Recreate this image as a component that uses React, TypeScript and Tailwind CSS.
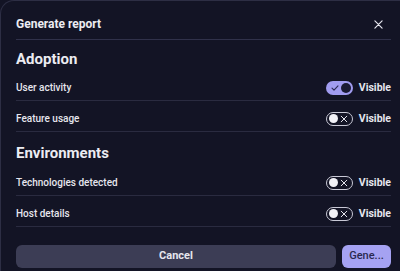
import React from "react";

function Toggle({ on }: { on: boolean }) {
  if (on) {
    return (
      <div className="flex h-[14px] w-[27px] items-center justify-between rounded-full bg-[#a19cf0] pl-[5px] pr-[2px]">
        <svg width="8" height="8" viewBox="0 0 8 8" fill="none">
          <path d="M1 4.2 L3 6.2 L7 1.8" stroke="#2c2a55" strokeWidth="1.1" strokeLinecap="round" strokeLinejoin="round" />
        </svg>
        <div className="h-[10px] w-[10px] rounded-full bg-[#1a1a33]" />
      </div>
    );
  }
  return (
    <div className="flex h-[14px] w-[27px] items-center justify-between rounded-full border border-[#c9c9d6] pl-[2px] pr-[4px]">
      <div className="h-[9px] w-[9px] rounded-full bg-[#f2f2f7]" />
      <svg width="8" height="8" viewBox="0 0 8 8" fill="none">
        <path d="M1.2 1.2 L6.8 6.8 M6.8 1.2 L1.2 6.8" stroke="#e5e5ee" strokeWidth="1" strokeLinecap="round" />
      </svg>
    </div>
  );
}

function Row({ label, on }: { label: string; on: boolean }) {
  return (
    <div className="flex h-[31px] items-center justify-between border-b border-[#2a2b40] pt-[5px]">
      <span className="text-[10px] font-medium leading-[14px] text-[#e6e6ee]">{label}</span>
      <div className="flex items-center gap-[6px]">
        <Toggle on={on} />
        <span className="text-[10.5px] font-bold leading-[14px] text-[#e6e6ee]">Visible</span>
      </div>
    </div>
  );
}

export default function App() {
  return (
    <div
      className="h-[271px] w-[400px] overflow-hidden bg-[#131425]"
      style={{ fontFamily: "Roboto, sans-serif" }}
    >
      <div className="h-[300px] w-[420px] rounded-tl-[14px] border-l border-t border-[#2d2e44] bg-[#131425]">
        <div className="w-[399px] pl-[15px] pr-[9px]">
          <div className="flex h-[39px] items-center justify-between border-b border-[#30314a] pt-[8px]">
            <span className="text-[12px] font-bold leading-[16px] text-[#ececf2]">Generate report</span>
            <svg width="9" height="9" viewBox="0 0 10 10" fill="none" className="mr-[8px]">
              <path d="M1 1 L9 9 M9 1 L1 9" stroke="#e8e8f0" strokeWidth="1.3" strokeLinecap="round" />
            </svg>
          </div>
          <div className="h-[30px] pt-[10px]">
            <div className="text-[15px] font-bold leading-[18px] text-[#ececf2]">Adoption</div>
          </div>
          <Row label="User activity" on={true} />
          <Row label="Feature usage" on={false} />
          <div className="h-[33px] pt-[12px]">
            <div className="text-[15px] font-bold leading-[18px] text-[#ececf2]">Environments</div>
          </div>
          <Row label="Technologies detected" on={false} />
          <Row label="Host details" on={false} />
          <div className="mt-[18px] flex gap-[6px]">
            <button className="h-[23px] flex-1 rounded-[6px] bg-[#3c3d55] text-[11px] font-bold text-[#e6e6ee]">
              Cancel
            </button>
            <button className="h-[23px] w-[49px] rounded-[6px] bg-[#a5a2f2] text-[11px] font-medium text-[#2a2950]">
              Gene...
            </button>
          </div>
        </div>
      </div>
    </div>
  );
}
